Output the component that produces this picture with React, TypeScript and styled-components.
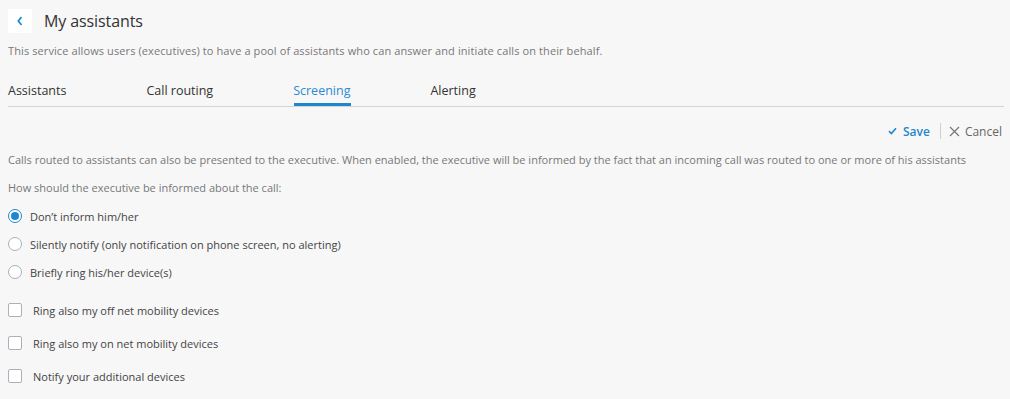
import React, { useState } from "react";
import styled, { createGlobalStyle } from "styled-components";

const GlobalStyle = createGlobalStyle`
  html, body {
    margin: 0;
    padding: 0;
    background: #f7f7f7;
  }
  body {
    font-family: "Open Sans", "Noto Sans", sans-serif;
    color: #333;
  }
`;

const Page = styled.div`
  padding: 9px 6px 0 8px;
  box-sizing: border-box;
  width: 1010px;
  height: 399px;
  overflow: hidden;
`;

const Header = styled.div`
  display: flex;
  align-items: center;
  gap: 12px;
  height: 24px;
`;

const BackButton = styled.button`
  width: 24px;
  height: 24px;
  border: none;
  border-radius: 2px;
  background: #fff;
  padding: 0;
  display: flex;
  align-items: center;
  justify-content: center;
  cursor: pointer;
`;

const Title = styled.h1`
  margin: 0;
  font-size: 16px;
  font-weight: 400;
  color: #333;
  letter-spacing: -0.1px;
`;

const Muted = styled.p<{ $top: number; $spacing?: number }>`
  margin: ${(p) => p.$top}px 0 0;
  font-size: 11px;
  line-height: 16px;
  color: #777;
  letter-spacing: ${(p) => p.$spacing ?? 0}px;
  white-space: nowrap;
`;

const Tabs = styled.div`
  display: flex;
  gap: 80px;
  margin-top: 23px;
  border-bottom: 1px solid #d4d4d4;
  height: 24px;
`;

const Tab = styled.div<{ $active?: boolean }>`
  font-size: 12.5px;
  line-height: 17px;
  color: ${(p) => (p.$active ? "#2a8bd0" : "#333")};
  position: relative;
  ${(p) =>
    p.$active &&
    `&::after {
      content: "";
      position: absolute;
      left: 1px;
      right: -1px;
      top: 21px;
      height: 3px;
      background: #1d87cd;
    }`}
`;

const Actions = styled.div`
  display: flex;
  justify-content: flex-end;
  align-items: center;
  margin-top: 16px;
  height: 16px;
  font-size: 12px;
`;

const SaveBtn = styled.span`
  display: flex;
  align-items: center;
  gap: 6px;
  color: #1d87cd;
  font-weight: 600;
`;

const Divider = styled.span`
  width: 1px;
  height: 16px;
  background: #d0d0d0;
  margin: 0 8px 0 10px;
`;

const CancelBtn = styled.span`
  display: flex;
  align-items: center;
  gap: 5px;
  color: #666;
  padding-right: 2px;
`;

const OptionList = styled.div<{ $top: number; $gap: number }>`
  display: flex;
  flex-direction: column;
  gap: ${(p) => p.$gap}px;
  margin-top: ${(p) => p.$top}px;
`;

const Option = styled.label<{ $gap: number }>`
  display: flex;
  align-items: center;
  gap: ${(p) => p.$gap}px;
  height: 16px;
  font-size: 11px;
  color: #444;
  cursor: pointer;
`;

const RadioMark = styled.span<{ $on?: boolean }>`
  width: 14px;
  height: 14px;
  box-sizing: border-box;
  border-radius: 50%;
  border: 1px solid ${(p) => (p.$on ? "#1d87cd" : "#aab1b8")};
  background: #fff;
  display: flex;
  align-items: center;
  justify-content: center;
  &::after {
    content: "";
    width: 8px;
    height: 8px;
    border-radius: 50%;
    background: ${(p) => (p.$on ? "#1d87cd" : "transparent")};
  }
`;

const BoxMark = styled.span`
  width: 14px;
  height: 14px;
  box-sizing: border-box;
  border: 1px solid #aab1b8;
  border-radius: 2px;
  background: #fff;
`;

const radios = [
  "Don\u2019t inform him/her",
  "Silently notify (only notification on phone screen, no alerting)",
  "Briefly ring his/her device(s)",
];

const checks = [
  "Ring also my off net mobility devices",
  "Ring also my on net mobility devices",
  "Notify your additional devices",
];

export default function App() {
  const [choice, setChoice] = useState(0);
  return (
    <>
      <GlobalStyle />
      <Page>
        <Header>
          <BackButton aria-label="Back">
            <svg width="8" height="12" viewBox="0 0 8 12">
              <path d="M5.5 2 L2.3 6 L5.5 10" fill="none" stroke="#1d87cd" strokeWidth="1.7" />
            </svg>
          </BackButton>
          <Title>My assistants</Title>
        </Header>
        <Muted $top={10} $spacing={0.1}>
          This service allows users (executives) to have a pool of assistants who can answer and initiate calls on their behalf.
        </Muted>
        <Tabs>
          <Tab>Assistants</Tab>
          <Tab>Call routing</Tab>
          <Tab $active>Screening</Tab>
          <Tab>Alerting</Tab>
        </Tabs>
        <Actions>
          <SaveBtn>
            <svg width="9" height="8" viewBox="0 0 9 8">
              <path d="M1 4.2 L3.4 6.5 L8 1.3" fill="none" stroke="#1d87cd" strokeWidth="1.6" />
            </svg>
            Save
          </SaveBtn>
          <Divider />
          <CancelBtn>
            <svg width="11" height="11" viewBox="0 0 11 11">
              <path d="M1 1 L10 10 M10 1 L1 10" stroke="#777" strokeWidth="1.2" />
            </svg>
            Cancel
          </CancelBtn>
        </Actions>
        <Muted $top={13}>
          Calls routed to assistants can also be presented to the executive. When enabled, the executive will be informed by the fact that an incoming call was routed to one or more of his assistants
        </Muted>
        <Muted $top={12}>How should the executive be informed about the call:</Muted>
        <OptionList $top={12} $gap={12}>
          {radios.map((r, i) => (
            <Option key={r} $gap={8} onClick={() => setChoice(i)}>
              <RadioMark $on={choice === i} />
              {r}
            </Option>
          ))}
        </OptionList>
        <OptionList $top={22} $gap={17}>
          {checks.map((c) => (
            <Option key={c} $gap={11}>
              <BoxMark />
              {c}
            </Option>
          ))}
        </OptionList>
      </Page>
    </>
  );
}
